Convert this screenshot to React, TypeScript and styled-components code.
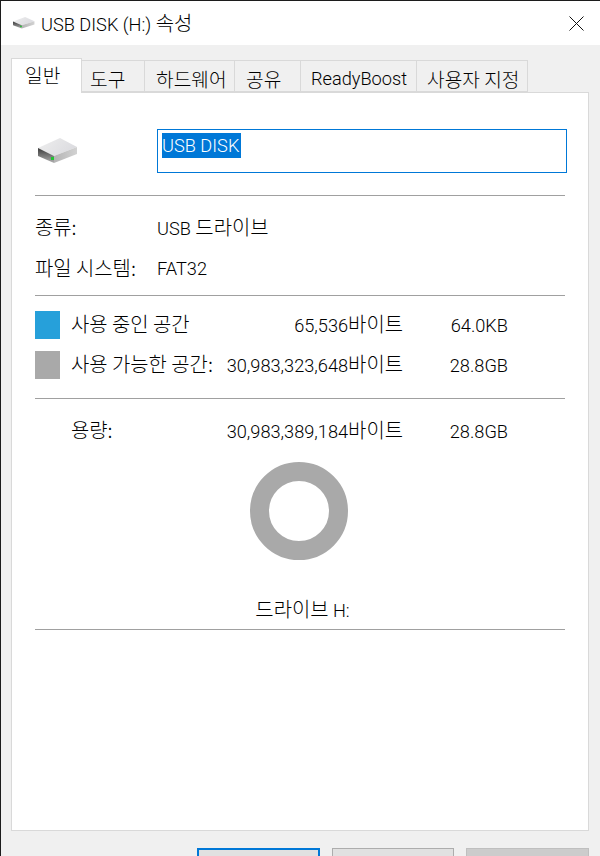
import React from "react";
import styled, { createGlobalStyle } from "styled-components";

const Global = createGlobalStyle`
  html, body { margin: 0; padding: 0; background: #f0f0f0; overflow: hidden; }
  * { box-sizing: border-box; }
`;

const Window = styled.div`
  width: 600px; height: 856px; overflow: hidden;
  display: flex; flex-direction: column;
  background: #f0f0f0;
  border-top: 1px solid #1c1c1c;
  border-left: 1px solid #1c1c1c;
  font-family: Roboto, "Noto Sans CJK KR", sans-serif;
  font-size: 18.2px; font-weight: 300; color: #000;
`;
const Ko = styled.span`
  font-family: "Noto Sans CJK KR", sans-serif;
  font-size: 19.9px; font-weight: 300;
`;
const TabKo = styled(Ko)`font-size: 19.2px;`;
const TitleBar = styled.div`
  height: 44px; flex: none; background: #fff;
  display: flex; align-items: center; padding: 0 16px 0 12px; gap: 6px;
`;
const Title = styled.div`flex: 1; line-height: 24px; margin-top: 1px; white-space: pre;`;
const Body = styled.div`flex: 1; padding: 12px 11px 0 10px; display: flex; flex-direction: column; min-height: 0;`;
const Tabs = styled.div`display: flex; align-items: flex-end; height: 35px; flex: none; position: relative; z-index: 1;`;
const Tab = styled.div<{ $w: number; $pad: number; $active?: boolean }>`
  width: ${p => p.$w}px;
  height: ${p => (p.$active ? 35 : 32)}px;
  margin-bottom: ${p => (p.$active ? -1 : 0)}px;
  background: ${p => (p.$active ? "#fff" : "#f0f0f0")};
  border: 1px solid #d9d9d9;
  border-left-width: ${p => (p.$active ? 1 : 0)}px;
  border-bottom: ${p => (p.$active ? "none" : "1px solid #d9d9d9")};
  padding-left: ${p => p.$pad}px;
  padding-top: ${p => (p.$active ? 4 : 6)}px;
  line-height: 24px; white-space: nowrap;
`;
const Panel = styled.div`
  width: 578px; height: 739px; flex: none;
  background: #fff; border: 1px solid #d9d9d9;
  padding: 36px 23px 0 23px;
  display: flex; flex-direction: column;
`;
const NameRow = styled.div`display: flex; align-items: center; height: 44px; gap: 79px; padding-left: 3px;`;
const NameInput = styled.div`
  flex: none; width: 410px; height: 44px; border: 1px solid #0078d7;
  padding: 3px 0 0 4px; display: flex; align-items: flex-start;
`;
const Selected = styled.span`background: #0078d7; color: #fff; height: 25px; line-height: 25px; padding-right: 2px;`;
const Rule = styled.div<{ $top: number }>`height: 1px; background: #a0a0a0; flex: none; margin-top: ${p => p.$top}px;`;
const InfoRow = styled.div<{ $top: number }>`
  display: flex; align-items: center; height: 24px; margin-top: ${p => p.$top}px; line-height: 24px;
`;
const InfoLabel = styled.div`width: 122px; white-space: nowrap;`;
const UsageRow = styled.div<{ $top: number }>`
  display: grid; grid-template-columns: 25px 157px 186px 105px; align-items: center;
  height: 28px; margin-top: ${p => p.$top}px; white-space: nowrap; line-height: 24px;
`;
const Swatch = styled.div<{ $color?: string }>`width: 25px; height: 28px; background: ${p => p.$color || "transparent"};`;
const UsageLabel = styled.div`padding-left: 11px; margin-top: -1px;`;
const Bytes = styled.div`text-align: right; margin-top: -1px; margin-left: -40px;`;
const Short = styled.div`text-align: right; margin-top: 1px;`;
const DonutWrap = styled.div`display: flex; justify-content: center; margin-top: 17px; padding-right: 3px;`;
const DriveLabel = styled.div`text-align: center; margin-top: 37px; line-height: 24px; padding-left: 5px;`;
const Footer = styled.div`display: flex; gap: 12px; padding: 17px 0 0 186px; flex: none;`;
const Button = styled.div<{ $bg: string; $border: string; $bw: number }>`
  width: 123px; height: 30px; background: ${p => p.$bg}; border: ${p => p.$bw}px solid ${p => p.$border};
`;

const DriveIcon = ({ w, h, id }: { w: number; h: number; id: string }) => (
  <svg width={w} height={h} viewBox="0 0 40 26" preserveAspectRatio="none" style={{ display: "block", flex: "none" }}>
    <defs>
      <linearGradient id={id + "t"} x1="0" y1="0" x2="1" y2="0.4">
        <stop offset="0" stopColor="#eeeeee" />
        <stop offset="1" stopColor="#dcdce0" />
      </linearGradient>
      <linearGradient id={id + "s"} x1="0" y1="0" x2="1" y2="0">
        <stop offset="0" stopColor="#b4b4b4" />
        <stop offset="1" stopColor="#d2d2d2" />
      </linearGradient>
      <linearGradient id={id + "f"} x1="0" y1="0" x2="0" y2="1">
        <stop offset="0" stopColor="#3a3a3a" />
        <stop offset="1" stopColor="#b0b0b0" />
      </linearGradient>
    </defs>
    <path d="M0 10 L22 0 L39 9 L16 18 Z" fill={`url(#${id}t)`} />
    <path d="M16 18 L39 9 L39 16 L16 25 Z" fill={`url(#${id}s)`} />
    <path d="M0 10 L16 18 L16 25 L0 18 Z" fill={`url(#${id}f)`} />
    <rect x="13" y="19" width="3" height="3" fill="#22c433" />
  </svg>
);

export default function App() {
  return (
    <Window>
      <Global />
      <TitleBar>
        <DriveIcon w={22} h={12} id="a" />
        <Title>USB DISK (H:) <Ko>속성</Ko></Title>
        <svg width="15" height="15" viewBox="0 0 15 15">
          <path d="M0.5 0.5 L14.5 14.5 M14.5 0.5 L0.5 14.5" stroke="#111" strokeWidth="1" fill="none" />
        </svg>
      </TitleBar>
      <Body>
        <Tabs>
          <Tab $w={71} $pad={13} $active><TabKo>일반</TabKo></Tab>
          <Tab $w={63} $pad={8}><TabKo>도구</TabKo></Tab>
          <Tab $w={90} $pad={11}><TabKo>하드웨어</TabKo></Tab>
          <Tab $w={66} $pad={11}><TabKo>공유</TabKo></Tab>
          <Tab $w={116} $pad={10}>ReadyBoost</Tab>
          <Tab $w={111} $pad={10}><TabKo>사용자 지정</TabKo></Tab>
        </Tabs>
        <Panel>
          <NameRow>
            <DriveIcon w={40} h={26} id="b" />
            <NameInput><Selected>USB DISK</Selected></NameInput>
          </NameRow>
          <Rule $top={22} />
          <InfoRow $top={20}><InfoLabel><Ko>종류:</Ko></InfoLabel><span>USB <Ko>드라이브</Ko></span></InfoRow>
          <InfoRow $top={17}><InfoLabel><Ko>파일 시스템:</Ko></InfoLabel>FAT32</InfoRow>
          <Rule $top={14} />
          <UsageRow $top={15}>
            <Swatch $color="#26a0da" />
            <UsageLabel><Ko>사용 중인 공간</Ko></UsageLabel>
            <Bytes>65,536<Ko>바이트</Ko></Bytes>
            <Short>64.0KB</Short>
          </UsageRow>
          <UsageRow $top={12}>
            <Swatch $color="#a9a9a9" />
            <UsageLabel><Ko>사용 가능한 공간:</Ko></UsageLabel>
            <Bytes>30,983,323,648<Ko>바이트</Ko></Bytes>
            <Short>28.8GB</Short>
          </UsageRow>
          <Rule $top={19} />
          <UsageRow $top={18}>
            <Swatch />
            <UsageLabel><Ko>용량:</Ko></UsageLabel>
            <Bytes>30,983,389,184<Ko>바이트</Ko></Bytes>
            <Short>28.8GB</Short>
          </UsageRow>
          <DonutWrap>
            <svg width="98" height="98" viewBox="0 0 98 98">
              <circle cx="49" cy="49" r="39.5" fill="none" stroke="#a9a9a9" strokeWidth="19" />
            </svg>
          </DonutWrap>
          <DriveLabel><Ko>드라이브</Ko> H:</DriveLabel>
          <Rule $top={6} />
        </Panel>
        <Footer>
          <Button $bg="#e1e1e1" $border="#0078d7" $bw={2} />
          <Button $bg="#e1e1e1" $border="#adadad" $bw={1} />
          <Button $bg="#cccccc" $border="#bfbfbf" $bw={1} />
        </Footer>
      </Body>
    </Window>
  );
}
